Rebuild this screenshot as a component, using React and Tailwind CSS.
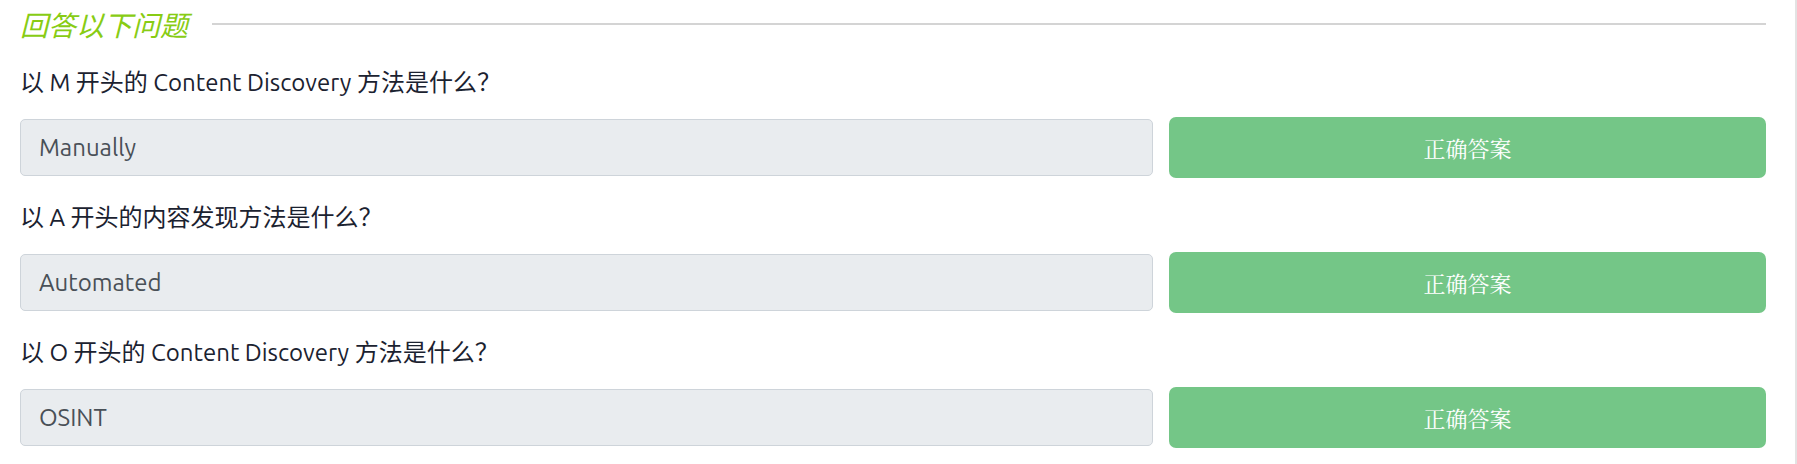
import React from "react";

const questions = [
  { q: "以 M 开头的 Content Discovery 方法是什么？", a: "Manually" },
  { q: "以 A 开头的内容发现方法是什么？", a: "Automated" },
  { q: "以 O 开头的 Content Discovery 方法是什么？", a: "OSINT" },
];

const font = { fontFamily: "Ubuntu, 'Noto Sans', 'Noto Sans CJK SC', sans-serif" };

export default function App() {
  return (
    <div
      className="w-full min-h-[464px] bg-white border-r-2 border-[#e3e3e3] pl-[20px] pr-[29px] pt-[8px]"
      style={font}
    >
      <div className="flex items-center h-[32px]">
        <h5 className="italic text-[28px] leading-[32px] text-[#88cc14] whitespace-nowrap font-['Noto_Sans_CJK_SC',sans-serif]">
          回答以下问题
        </h5>
        <div className="flex-1 ml-[24px] h-[2px] bg-[#d4d4d4]"></div>
      </div>
      <div className="mt-[26px] flex flex-col gap-[23px]">
        {questions.map((item, i) => (
          <div key={i} className="flex flex-col">
            <p className="text-[24px] leading-[33px] text-[#1b2230] whitespace-nowrap">{item.q}</p>
            <div className="mt-[18px] flex items-center gap-[16px] h-[61px]">
              <div className="flex-1 h-[57px] rounded-[5px] border border-[#ced4da] bg-[#e9ecef] flex items-center pl-[18px] text-[24px] text-[#495057]">
                {item.a}
              </div>
              <button className="w-[597px] h-[61px] rounded-[7px] bg-[#74c687] text-white text-[22px] flex items-center justify-center font-['Noto_Serif_CJK_SC','AR_PL_UMing_CN','Noto_Sans_CJK_SC',serif]">
                正确答案
              </button>
            </div>
          </div>
        ))}
      </div>
    </div>
  );
}
